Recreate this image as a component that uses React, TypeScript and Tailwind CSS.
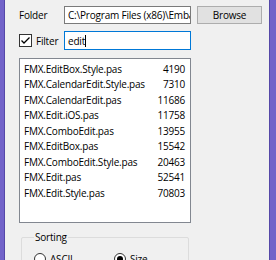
import React from "react";

const files: [string, number][] = [
  ["FMX.EditBox.Style.pas", 4190],
  ["FMX.CalendarEdit.Style.pas", 7310],
  ["FMX.CalendarEdit.pas", 11686],
  ["FMX.Edit.iOS.pas", 11758],
  ["FMX.ComboEdit.pas", 13955],
  ["FMX.EditBox.pas", 15542],
  ["FMX.ComboEdit.Style.pas", 20463],
  ["FMX.Edit.pas", 52541],
  ["FMX.Edit.Style.pas", 70803],
];

export default function App() {
  return (
    <div
      className="w-[276px] h-[260px] flex overflow-hidden bg-[#f0f0f0] text-black text-[10px] leading-none tracking-[-0.2px]"
      style={{ fontFamily: '"Open Sans", "Noto Sans", sans-serif' }}
    >
      <div className="w-[5px] shrink-0 bg-[#7263c9] border-r border-[#5548a8]" />
      <div className="flex-1 flex flex-col pt-[6px] pl-[14px]">
        {/* Folder row */}
        <div className="shrink-0 flex items-center h-[18px]">
          <span className="w-[45px]">Folder</span>
          <div className="w-[127px] h-[18px] bg-white border border-[#7a7a7a] flex items-center pl-[3px] overflow-hidden whitespace-nowrap">
            C:\Program Files (x86)\Emba
          </div>
          <button className="ml-[6px] w-[65px] h-[18px] bg-[#e1e1e1] border border-[#adadad] flex items-center justify-center">
            Browse
          </button>
        </div>
        {/* Filter row */}
        <div className="shrink-0 flex items-center h-[19px] mt-[7px]">
          <div className="w-[13px] h-[13px] bg-white border border-[#333] flex items-center justify-center">
            <svg width="11" height="11" viewBox="0 0 11 11">
              <path d="M1.5 5.5 L4 8 L9.5 2.5" fill="none" stroke="#000" strokeWidth="1.3" />
            </svg>
          </div>
          <span className="ml-[4px] w-[28px]">Filter</span>
          <div className="w-[127px] h-[19px] bg-white border border-[#0078d7] flex items-center pl-[3px]">
            edit<span className="w-px h-[12px] bg-black" />
          </div>
        </div>
        {/* List */}
        <div className="shrink-0 mt-[8px] w-[172px] h-[165px] bg-white border border-[#828790] pt-[2px] pl-[4px] pr-[5px]">
          {files.map(([n, s]) => (
            <div key={n} className="h-[15.5px] flex items-center justify-between whitespace-nowrap">
              <span>{n}</span>
              <span>{s}</span>
            </div>
          ))}
        </div>
        {/* Sorting group */}
        <div className="shrink-0 relative mt-[14px] ml-[2px] w-[168px] h-[40px] border border-[#dcdcdc] rounded-[2px]">
          <span className="absolute left-[12px] -top-[6px] bg-[#f0f0f0] px-[1px]">Sorting</span>
          <div className="flex items-center mt-[15px] ml-[12px]">
            <div className="w-[12px] h-[12px] rounded-full bg-white border border-[#333]" />
            <span className="ml-[4px] w-[64px]">ASCII</span>
            <div className="w-[12px] h-[12px] rounded-full bg-white border border-[#333] flex items-center justify-center">
              <div className="w-[6px] h-[6px] rounded-full bg-black" />
            </div>
            <span className="ml-[4px]">Size</span>
          </div>
        </div>
      </div>
      <div className="w-[7px] shrink-0 bg-[#7263c9] border-l border-[#5548a8]" />
    </div>
  );
}
